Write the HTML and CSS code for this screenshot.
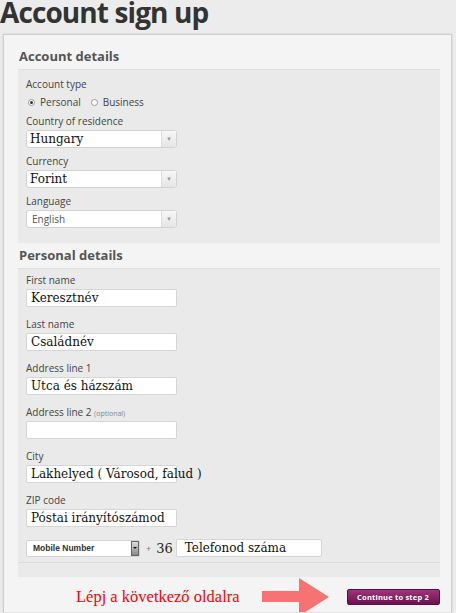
FILE: index.html
```html
<!DOCTYPE html>
<html>
<head>
<meta charset="utf-8">
<link rel="stylesheet" href="styles.css">
</head>
<body>
<h1 class="title">Account sign up</h1>
<div class="panel">
  <h2 class="sec-head">Account details</h2>
  <div class="box box-account">
    <div class="lbl">Account type</div>
    <div class="radios">
      <span class="radio on"></span><span class="rtext">Personal</span>
      <span class="radio"></span><span class="rtext">Business</span>
    </div>
    <div class="group first-group">
      <div class="lbl">Country of residence</div>
      <div class="select"><span class="sval">Hungary</span><span class="sarrow">▾</span></div>
    </div>
    <div class="group">
      <div class="lbl">Currency</div>
      <div class="select"><span class="sval">Forint</span><span class="sarrow">▾</span></div>
    </div>
    <div class="group">
      <div class="lbl">Language</div>
      <div class="select"><span class="sval sans">English</span><span class="sarrow">▾</span></div>
    </div>
  </div>
  <h2 class="sec-head sec-head2">Personal details</h2>
  <div class="box box-personal">
    <div class="field">
      <div class="lbl">First name</div>
      <div class="input">Keresztnév</div>
    </div>
    <div class="field">
      <div class="lbl">Last name</div>
      <div class="input">Családnév</div>
    </div>
    <div class="field">
      <div class="lbl">Address line 1</div>
      <div class="input">Utca és házszám</div>
    </div>
    <div class="field">
      <div class="lbl">Address line 2 <span class="opt">(optional)</span></div>
      <div class="input"></div>
    </div>
    <div class="field">
      <div class="lbl">City</div>
      <div class="input">Lakhelyed ( Városod, falud )</div>
    </div>
    <div class="field">
      <div class="lbl">ZIP code</div>
      <div class="input">Póstai irányítószámod</div>
    </div>
    <div class="phone">
      <div class="mselect"><span class="mval">Mobile Number</span><span class="marrow"><span class="tri"></span></span></div>
      <span class="plus">+</span>
      <span class="code">36</span>
      <div class="input pinput">Telefonod száma</div>
    </div>
    <div class="rule"></div>
  </div>
  <div class="footer">
    <span class="note">Lépj a következő oldalra</span>
    <svg class="arrow" width="68" height="36" viewBox="0 0 68 36">
      <polygon points="0,13 37,13 37,0 67,19 37,38 37,24 0,24" fill="#f77272"/>
    </svg>
    <button class="btn">Continue to step 2</button>
  </div>
</div>
</body>
</html>
```
FILE: styles.css
```css
html, body {
  margin: 0;
  padding: 0;
}
body {
  background: #ececec;
  font-family: "Open Sans", "DejaVu Sans", sans-serif;
  width: 456px;
  height: 613px;
  overflow: hidden;
}
.title {
  margin: -2px 0 0 0;
  font-size: 28px;
  line-height: 28px;
  font-weight: 700;
  color: #333;
  letter-spacing: -0.9px;
  height: 36px;
}
.panel {
  margin-left: 3px;
  width: 449px;
  height: 578px;
  overflow: hidden;
  background: #f4f4f4;
  border: 1px solid #cfcfcf;
  border-bottom: none;
  box-shadow: 0 0 2px rgba(0,0,0,0.15);
  padding: 0 13px 0 14px;
  box-sizing: border-box;
}
.sec-head {
  margin: 0;
  padding: 14px 0 0 1px;
  height: 34px;
  box-sizing: border-box;
  font-size: 13px;
  line-height: 15px;
  font-weight: 700;
  color: #555;
}
.sec-head2 {
  height: 25px;
  padding-top: 5px;
}
.box {
  background: #eaeaea;
  border-top: 1px solid #e0e0e0;
  padding: 7px 8px 15px 8px;
  width: 422px;
  box-sizing: border-box;
}
.lbl {
  font-size: 10px;
  line-height: 14px;
  color: #444;
  height: 14px;
}
.opt {
  font-size: 7px;
  color: #888;
}
.radios {
  display: flex;
  align-items: center;
  margin-top: 4px;
  height: 14px;
  font-size: 10px;
  color: #444;
}
.radio {
  width: 5px;
  height: 5px;
  border: 1px solid #999;
  border-radius: 50%;
  margin: 0 5px 0 2px;
  background: #fff;
  box-sizing: content-box;
  position: relative;
}
.radio.on::after {
  content: "";
  position: absolute;
  left: 1px;
  top: 1px;
  width: 3px;
  height: 3px;
  border-radius: 50%;
  background: #333;
}
.rtext {
  margin-right: 8px;
}
.first-group {
  margin-top: 5px;
}
.group + .group {
  margin-top: 6px;
}
.select {
  margin-top: 2px;
  width: 151px;
  height: 18px;
  box-sizing: border-box;
  border: 1px solid #d2d2d2;
  border-radius: 3px;
  background: #fff;
  display: flex;
  align-items: center;
}
.sval {
  flex: 1;
  padding-left: 3px;
  font-family: "DejaVu Serif", "Liberation Serif", serif;
  font-size: 12px;
  color: #111;
}
.sval.sans {
  font-family: "Open Sans", sans-serif;
  font-size: 10px;
  color: #555;
  padding-left: 5px;
}
.sarrow {
  width: 14px;
  height: 16px;
  border-left: 1px solid #ddd;
  background: linear-gradient(#f7f7f7, #e6e6e6);
  font-size: 7px;
  color: #999;
  text-align: center;
  line-height: 16px;
}
.box-personal {
  padding-top: 4px;
  padding-bottom: 14px;
}
.field + .field {
  margin-top: 10px;
}
.input {
  margin-top: 2px;
  width: 151px;
  height: 18px;
  box-sizing: border-box;
  border: 1px solid #d6d6d6;
  border-radius: 2px;
  background: #fff;
  font-family: "DejaVu Serif", "Liberation Serif", serif;
  font-size: 12px;
  line-height: 16px;
  color: #111;
  padding-left: 4px;
  white-space: nowrap;
  overflow: visible;
}
.phone {
  margin-top: 12px;
  display: flex;
  align-items: center;
  height: 18px;
}
.mselect {
  width: 114px;
  height: 17px;
  box-sizing: border-box;
  border: 1px solid #d4d4d4;
  border-radius: 2px;
  background: #fff;
  display: flex;
  align-items: center;
}
.mval {
  flex: 1;
  padding-left: 6px;
  font-family: "Liberation Sans", Arial, sans-serif;
  font-size: 8.5px;
  font-weight: 700;
  color: #333;
}
.marrow {
  width: 8px;
  height: 15px;
  background: linear-gradient(#ddd, #888);
  border: 1px solid #666;
  box-sizing: border-box;
  display: flex;
  align-items: center;
  justify-content: center;
}
.tri {
  width: 0;
  height: 0;
  border-left: 2px solid transparent;
  border-right: 2px solid transparent;
  border-top: 2px solid #111;
}
.plus {
  font-size: 9px;
  color: #777;
  margin: 0 5px 0 6px;
}
.code {
  font-family: "DejaVu Serif", "Liberation Serif", serif;
  font-size: 13px;
  color: #222;
  margin-right: 3px;
}
.pinput {
  margin-top: 0;
  width: 146px;
  padding-left: 8px;
}
.rule {
  margin: 5px -8px 0 -8px;
  border-top: 1px solid #dcdcdc;
}
.footer {
  display: flex;
  align-items: center;
  height: 36px;
}
.note {
  font-family: "Liberation Serif", serif;
  font-size: 16.5px;
  color: #f00;
  margin-left: 58px;
  margin-top: 4px;
  white-space: nowrap;
  flex-shrink: 0;
}
.arrow {
  margin-left: 22px;
  margin-top: 2px;
  flex-shrink: 0;
}
.btn {
  margin-left: 17px;
  margin-top: 3px;
  width: 93px;
  height: 16px;
  flex-shrink: 0;
  padding: 0;
  border: 1px solid #5c0d3f;
  border-radius: 2px;
  background: linear-gradient(#a0347a, #6c1250);
  color: #fff;
  font-family: "Open Sans", sans-serif;
  font-size: 7.5px;
  font-weight: 700;
  letter-spacing: 0.2px;
}
```
